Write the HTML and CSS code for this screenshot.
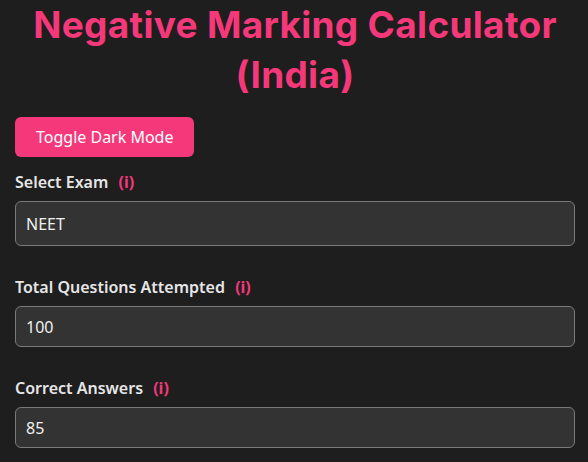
FILE: index.html
```html
<!DOCTYPE html>
<html lang="en">
<head>
<meta charset="utf-8">
<title>Negative Marking Calculator (India)</title>
<link rel="stylesheet" href="styles.css">
</head>
<body>
<div class="container">
  <h1 class="title">Negative Marking Calculator (India)</h1>
  <button class="toggle" type="button">Toggle Dark Mode</button>
  <div class="field">
    <label class="label" for="exam">Select Exam <span class="info">(i)</span></label>
    <select id="exam" class="control control-select"><option>NEET</option></select>
  </div>
  <div class="field">
    <label class="label" for="attempted">Total Questions Attempted <span class="info">(i)</span></label>
    <input id="attempted" class="control" type="text" value="100">
  </div>
  <div class="field">
    <label class="label" for="correct">Correct Answers <span class="info">(i)</span></label>
    <input id="correct" class="control" type="text" value="85">
  </div>
</div>
</body>
</html>
```
FILE: styles.css
```css
html, body {
  margin: 0;
  padding: 0;
  background: #1e1e1e;
}
body {
  font-family: "Noto Sans", "Open Sans", sans-serif;
  font-size: 16px;
  color: #e6e6e6;
}
.container {
  padding: 0 13px 0 15px;
}
.title {
  margin: 0 0 17px;
  font-family: Inter, "Noto Sans", sans-serif;
  font-weight: 700;
  font-size: 37px;
  letter-spacing: 0.3px;
  line-height: 50px;
  color: #f5387a;
  text-align: center;
}
.toggle {
  display: block;
  height: 40px;
  padding: 0 21px;
  border: none;
  border-radius: 6px;
  background: #f5387a;
  color: #ffffff;
  font-family: inherit;
  font-size: 16px;
}
.field {
  margin-top: 15px;
  margin-bottom: 31px;
}
.label {
  display: block;
  margin-bottom: 9px;
  font-weight: 600;
  line-height: 20px;
  color: #e6e6e6;
}
.info {
  margin-left: 6px;
  color: #f5387a;
  font-weight: 700;
}
.control {
  display: block;
  box-sizing: border-box;
  width: 100%;
  height: 41px;
  padding: 0 10px;
  border: 1px solid #7a7a7a;
  border-radius: 6px;
  background: #333333;
  color: #f0f0f0;
  font-family: inherit;
  font-size: 16px;
  outline: none;
}
.control-select {
  height: 45px;
  appearance: none;
  -webkit-appearance: none;
}
```
